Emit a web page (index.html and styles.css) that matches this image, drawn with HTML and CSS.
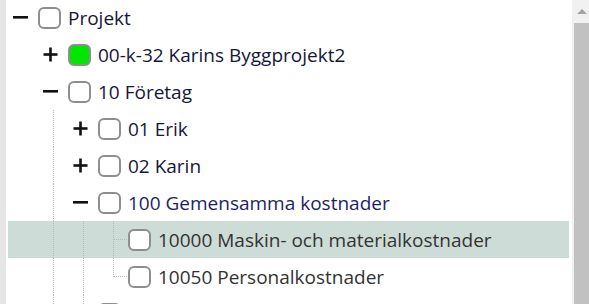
FILE: index.html
```html
<!DOCTYPE html>
<html lang="sv">
<head>
    <meta charset="UTF-8">
    <meta name="viewport" content="width=device-width, initial-scale=1.0">
    <title>Projektträd</title>
    <link rel="stylesheet" href="styles.css">
</head>
<body>
    <div class="frame">
        <div class="edge"></div>
        <div class="tree">
            <!-- nivå 0 -->
            <div class="row">
                <span class="tog"><svg width="15" height="15" viewBox="0 0 15 15"><rect x="0" y="6" width="15" height="2.6" fill="#111"/></svg></span>
                <span class="box"></span>
                <span class="label">Projekt</span>
            </div>
            <!-- nivå 1 -->
            <div class="row">
                <span class="guide"></span>
                <span class="tog"><svg width="15" height="15" viewBox="0 0 15 15"><rect x="0.5" y="6.2" width="14" height="2.6" fill="#111"/><rect x="6.2" y="0.5" width="2.6" height="14" fill="#111"/></svg></span>
                <span class="box green"></span>
                <span class="label">00-k-32 Karins Byggprojekt2</span>
            </div>
            <div class="row">
                <span class="guide"></span>
                <span class="tog"><svg width="15" height="15" viewBox="0 0 15 15"><rect x="0" y="6" width="15" height="2.6" fill="#111"/></svg></span>
                <span class="box"></span>
                <span class="label">10 Företag</span>
            </div>
            <!-- nivå 2 -->
            <div class="row">
                <span class="guide"></span>
                <span class="guide line"></span>
                <span class="tog"><svg width="15" height="15" viewBox="0 0 15 15"><rect x="0.5" y="6.2" width="14" height="2.6" fill="#111"/><rect x="6.2" y="0.5" width="2.6" height="14" fill="#111"/></svg></span>
                <span class="box"></span>
                <span class="label">01 Erik</span>
            </div>
            <div class="row">
                <span class="guide"></span>
                <span class="guide line"></span>
                <span class="tog"><svg width="15" height="15" viewBox="0 0 15 15"><rect x="0.5" y="6.2" width="14" height="2.6" fill="#111"/><rect x="6.2" y="0.5" width="2.6" height="14" fill="#111"/></svg></span>
                <span class="box"></span>
                <span class="label">02 Karin</span>
            </div>
            <div class="row">
                <span class="guide"></span>
                <span class="guide line"></span>
                <span class="tog"><svg width="15" height="15" viewBox="0 0 15 15"><rect x="0" y="6" width="15" height="2.6" fill="#111"/></svg></span>
                <span class="box"></span>
                <span class="label active">100 Gemensamma kostnader</span>
            </div>
            <!-- nivå 3 -->
            <div class="row selected">
                <span class="guide"></span>
                <span class="guide line"></span>
                <span class="guide line"></span>
                <span class="join"><span class="arm"></span></span>
                <span class="box"></span>
                <span class="label leaf">10000 Maskin- och materialkostnader</span>
            </div>
            <div class="row">
                <span class="guide"></span>
                <span class="guide line"></span>
                <span class="guide line"></span>
                <span class="join last"><span class="arm"></span></span>
                <span class="box"></span>
                <span class="label leaf">10050 Personalkostnader</span>
            </div>
            <div class="row">
                <span class="guide"></span>
                <span class="guide line"></span>
                <span class="tog cont"><svg width="15" height="15" viewBox="0 0 15 15"><rect x="0.5" y="6.2" width="14" height="2.6" fill="#111"/><rect x="6.2" y="0.5" width="2.6" height="14" fill="#111"/></svg></span>
                <span class="box"></span>
            </div>
        </div>
        <div class="scrollbar">
            <div class="sb-up"><span class="arrow"></span></div>
            <div class="sb-thumb"></div>
        </div>
    </div>
</body>
</html>
```

FILE: styles.css
```css
/* trädvy med prickade hjälplinjer */
html, body{
    margin: 0;
    height: 100%;
    overflow: hidden;
    background: #fff;
}
.frame{
    display: flex;
    height: 304px;
    font-family: "Open Sans", "Noto Sans", sans-serif;
    font-size: 19px;
}
.edge{
    width: 6px;
    background: #e6e6e6;
}
.tree{
    width: 561px;
    margin-left: 2px;
    margin-top: -1px;
}
.row{
    display: flex;
    align-items: center;
    height: 37px;
}
.row.selected{
    background: rgba(10, 80, 60, 0.2);
}
/* indragskolumner, 30px per nivå */
.guide{
    width: 30px;
    height: 100%;
    flex: none;
    box-sizing: border-box;
}
.guide.line{
    margin-left: 15px;
    width: 15px;
    border-left: 1px dotted #b8b8b8;
}
.tog{
    width: 30px;
    height: 100%;
    flex: none;
    display: flex;
    align-items: center;
    padding-left: 5px;
    box-sizing: border-box;
}
.tog.cont{
    background: repeating-linear-gradient(to bottom, #b8b8b8 0 1px, transparent 1px 2px) 15px 0 / 1px 10px no-repeat;
}
.join{
    width: 15px;
    height: 100%;
    margin-left: 15px;
    flex: none;
    box-sizing: border-box;
    border-left: 1px dotted #b8b8b8;
    align-self: flex-start;
}
.join.last{
    height: 50%;
}
.arm{
    display: block;
    height: 50%;
    width: 13px;
    box-sizing: border-box;
    border-bottom: 1px dotted #b8b8b8;
}
.join.last .arm{
    height: 100%;
}
.box{
    width: 23px;
    height: 22px;
    flex: none;
    box-sizing: border-box;
    border: 2px solid #8e8e8e;
    border-radius: 6px;
    background: #fff;
    margin-right: 7px;
}
.box.green{
    background: #00e600;
}
.label{
    color: #16163a;
    white-space: nowrap;
}
.label.active{
    color: #1d1d66;
}
.label.leaf{
    color: #333;
}
.scrollbar{
    margin-left: 3px;
    width: 17px;
    background: #f1f1f1;
    display: flex;
    flex-direction: column;
}
.sb-up{
    height: 23px;
    display: flex;
    align-items: center;
    justify-content: center;
    padding-left: 3px;
}
.arrow{
    width: 0;
    height: 0;
    border-left: 5px solid transparent;
    border-right: 5px solid transparent;
    border-bottom: 5px solid #a3a3a3;
}
.sb-thumb{
    flex: 1;
    margin-left: 2px;
    background: #c1c1c1;
}
```
